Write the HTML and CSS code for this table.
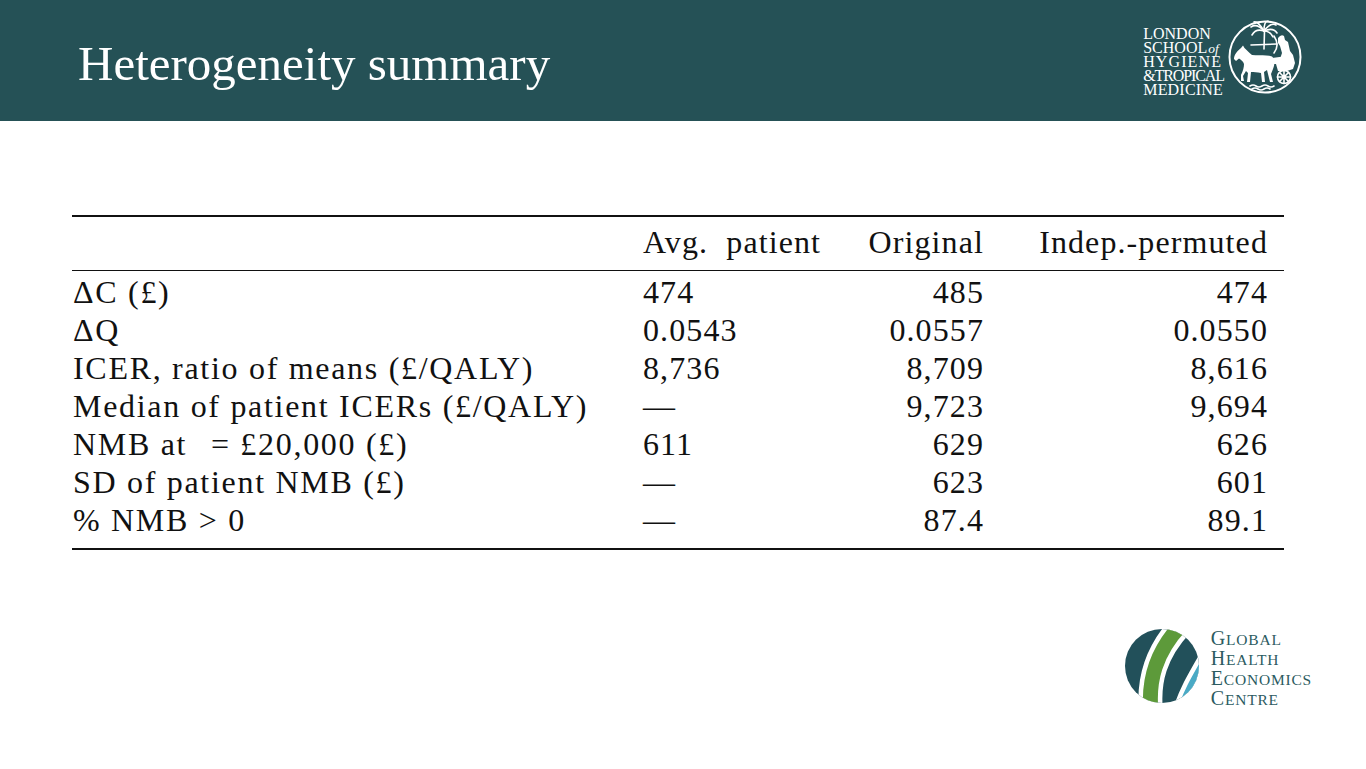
FILE: index.html
```html
<!DOCTYPE html>
<html lang="en">
<head>
<meta charset="utf-8">
<title>Heterogeneity summary</title>
<link rel="stylesheet" href="styles.css">
</head>
<body>
<header class="topbar">
  <h1 class="title">Heterogeneity summary</h1>
  <div class="lshtm">
    <div class="lshtm-text">
      <span class="l1">LONDON</span>
      <span class="l2">SCHOOL<i>of</i></span>
      <span class="l3">HYGIENE</span>
      <span class="l4">&amp;TROPICAL</span>
      <span class="l5">MEDICINE</span>
    </div>
    <svg class="emblem" width="76" height="76" viewBox="0 0 76 76">
      <circle cx="38" cy="38" r="35.5" fill="none" stroke="#fff" stroke-width="2"/>
      <g fill="none" stroke="#fff" stroke-width="1.6" stroke-linecap="round">
        <path d="M37 30 L37.5 12"/>
        <path d="M37 12 Q30 4 24 8"/>
        <path d="M37 12 Q31 2 27 3"/>
        <path d="M37 12 Q37 2 41 2"/>
        <path d="M37 12 Q44 3 49 6"/>
        <path d="M37 12 Q46 8 50 14"/>
        <path d="M37 12 Q29 9 25 16"/>
        <path d="M37 12 Q43 12 46 18"/>
        <path d="M24 26 L50 25"/>
        <path d="M47 17 Q53 26 47 34"/>
        <path d="M23 67 q3 -2 6 0 t6 0 t6 0 t6 0"/>
        <path d="M25 70 q3 -2 6 0 t6 0 t6 0"/>
        <circle cx="57" cy="58" r="6.5"/>
        <path d="M57 51.5 V64.5 M50.5 58 H63.5 M52.5 53.5 L61.5 62.5 M61.5 53.5 L52.5 62.5"/>
      </g>
      <g fill="#fff">
        <path d="M7 40 C7 36 10 32 14 29 L16 26.5 L17.5 29 C20 31 22 34 25 36 C32 36.5 40 35.5 45 37.5 C48 40 48 45 46 50 L44 55 L46 63 L43 63 L41 55 L40 51 L37 53 L38 63 L35 63 L34 54 C30 53 27 53 24 53 L23 63 L20 63 L21 54 L19 52 L16 57 L17 62 L14 62 L14 56 C16 52 17 48 17 45 C16 42 14 41 12 39.5 L9 42 Z"/>
        <path d="M51 19 Q54 15 57 17 L58 21 L61 23 L63 32 L66 36 L68 44 L66 50 L60 52 L51 52 L49 45 L53 40 L55 34 L53 27 L51 24 Z"/>
        <path d="M45 39 L60 37 L67 40 L65 45 L47 45 Z"/>
      </g>
    </svg>
  </div>
</header>

<main class="content">
  <div class="table">
    <div class="row head">
      <div class="cell lab"></div>
      <div class="cell c2">Avg.&nbsp; patient</div>
      <div class="cell num">Original</div>
      <div class="cell num">Indep.-permuted</div>
    </div>
    <div class="body">
      <div class="row">
        <div class="cell lab">ΔC (£)</div>
        <div class="cell c2">474</div>
        <div class="cell num">485</div>
        <div class="cell num">474</div>
      </div>
      <div class="row">
        <div class="cell lab">ΔQ</div>
        <div class="cell c2">0.0543</div>
        <div class="cell num">0.0557</div>
        <div class="cell num">0.0550</div>
      </div>
      <div class="row">
        <div class="cell lab">ICER, ratio of means (£/QALY)</div>
        <div class="cell c2">8,736</div>
        <div class="cell num">8,709</div>
        <div class="cell num">8,616</div>
      </div>
      <div class="row">
        <div class="cell lab">Median of patient ICERs (£/QALY)</div>
        <div class="cell c2">—</div>
        <div class="cell num">9,723</div>
        <div class="cell num">9,694</div>
      </div>
      <div class="row">
        <div class="cell lab">NMB at <span class="gap"></span>= £20,000 (£)</div>
        <div class="cell c2">611</div>
        <div class="cell num">629</div>
        <div class="cell num">626</div>
      </div>
      <div class="row">
        <div class="cell lab">SD of patient NMB (£)</div>
        <div class="cell c2">—</div>
        <div class="cell num">623</div>
        <div class="cell num">601</div>
      </div>
      <div class="row">
        <div class="cell lab">% NMB &gt; 0</div>
        <div class="cell c2">—</div>
        <div class="cell num">87.4</div>
        <div class="cell num">89.1</div>
      </div>
    </div>
  </div>

  <div class="ghec">
    <svg class="ghec-mark" width="74" height="74" viewBox="0 0 74 74">
      <defs>
        <clipPath id="gc"><circle cx="37" cy="37" r="37"/></clipPath>
      </defs>
      <g clip-path="url(#gc)" fill="none">
        <rect x="0" y="0" width="74" height="74" fill="#22505a"/>
        <path d="M26 82 C23 52 30 24 56 -4" stroke="#fff" stroke-width="24"/>
        <path d="M26 82 C23 52 30 24 56 -4" stroke="#5d9a3a" stroke-width="15"/>
        <path d="M57 86 C63 66 71 52 85 28" stroke="#fff" stroke-width="21"/>
        <path d="M57 86 C63 66 71 52 85 28" stroke="#4aaac5" stroke-width="12"/>
        <path d="M69 90 C75 70 83 56 97 32" stroke="#4aaac5" stroke-width="18"/>
      </g>
    </svg>
    <div class="ghec-text">
      <span><b>G</b>LOBAL</span>
      <span><b>H</b>EALTH</span>
      <span><b>E</b>CONOMICS</span>
      <span><b>C</b>ENTRE</span>
    </div>
  </div>
</main>
</body>
</html>
```

FILE: styles.css
```css
* { box-sizing: border-box; }

html, body {
  margin: 0;
  padding: 0;
  background: #ffffff;
}

body {
  width: 1366px;
  height: 769px;
  overflow: hidden;
  font-family: "Liberation Serif", "Times New Roman", serif;
  color: #111;
}

.topbar {
  height: 121px;
  background: #255156;
  display: flex;
  justify-content: space-between;
  align-items: flex-start;
  padding: 0 63px 0 78px;
}

.title {
  margin: 40px 0 0 0;
  font-family: "Liberation Serif", "Times New Roman", serif;
  font-weight: normal;
  font-size: 49px;
  line-height: 48px;
  letter-spacing: 0;
  color: #ffffff;
}

.lshtm {
  display: flex;
  align-items: flex-start;
  gap: 3px;
  margin-top: 19px;
}

.lshtm-text {
  display: flex;
  flex-direction: column;
  margin-top: 8px;
  color: #ffffff;
  font-family: "Liberation Serif", "Times New Roman", serif;
  font-size: 16px;
  line-height: 13.7px;
  letter-spacing: 0;
}

.lshtm-text i {
  font-size: 13.5px;
  letter-spacing: 0;
  margin-left: 1px;
}

.lshtm-text .l3 { letter-spacing: 1.1px; }
.lshtm-text .l4 { letter-spacing: -1.1px; }
.lshtm-text .l5 { letter-spacing: 0.2px; }

.emblem { display: block; }

.content {
  padding: 0 82px 0 72px;
}

.table {
  width: 1212px;
  margin-top: 94px;
  border-top: 2px solid #111;
  border-bottom: 2px solid #111;
  font-size: 32px;
  letter-spacing: 1.1px;
}

.row {
  display: grid;
  grid-template-columns: 571px 200px 141px 284px;
  padding-right: 16px;
  height: 38px;
  line-height: 38px;
  white-space: nowrap;
}

.row.head {
  height: 54px;
  padding-top: 6px;
  border-bottom: 1.3px solid #111;
}

.body {
  padding-top: 2px;
  padding-bottom: 9px;
}

.cell.lab {
  padding-left: 1px;
  letter-spacing: 1.7px;
}
.cell.c2 { text-align: left; }
.cell.num { text-align: right; }

.gap {
  display: inline-block;
  width: 14px;
}

.ghec {
  display: flex;
  justify-content: flex-end;
  align-items: flex-start;
  gap: 12px;
  margin-top: 79px;
  margin-right: -28px;
}

.ghec-mark { display: block; }

.ghec-text {
  display: flex;
  flex-direction: column;
  color: #2c5b5f;
  font-family: "Liberation Serif", "Times New Roman", serif;
  font-size: 15.5px;
  line-height: 19px;
  letter-spacing: 0.8px;
}

.ghec-text b {
  font-weight: normal;
  font-size: 20px;
}
```
